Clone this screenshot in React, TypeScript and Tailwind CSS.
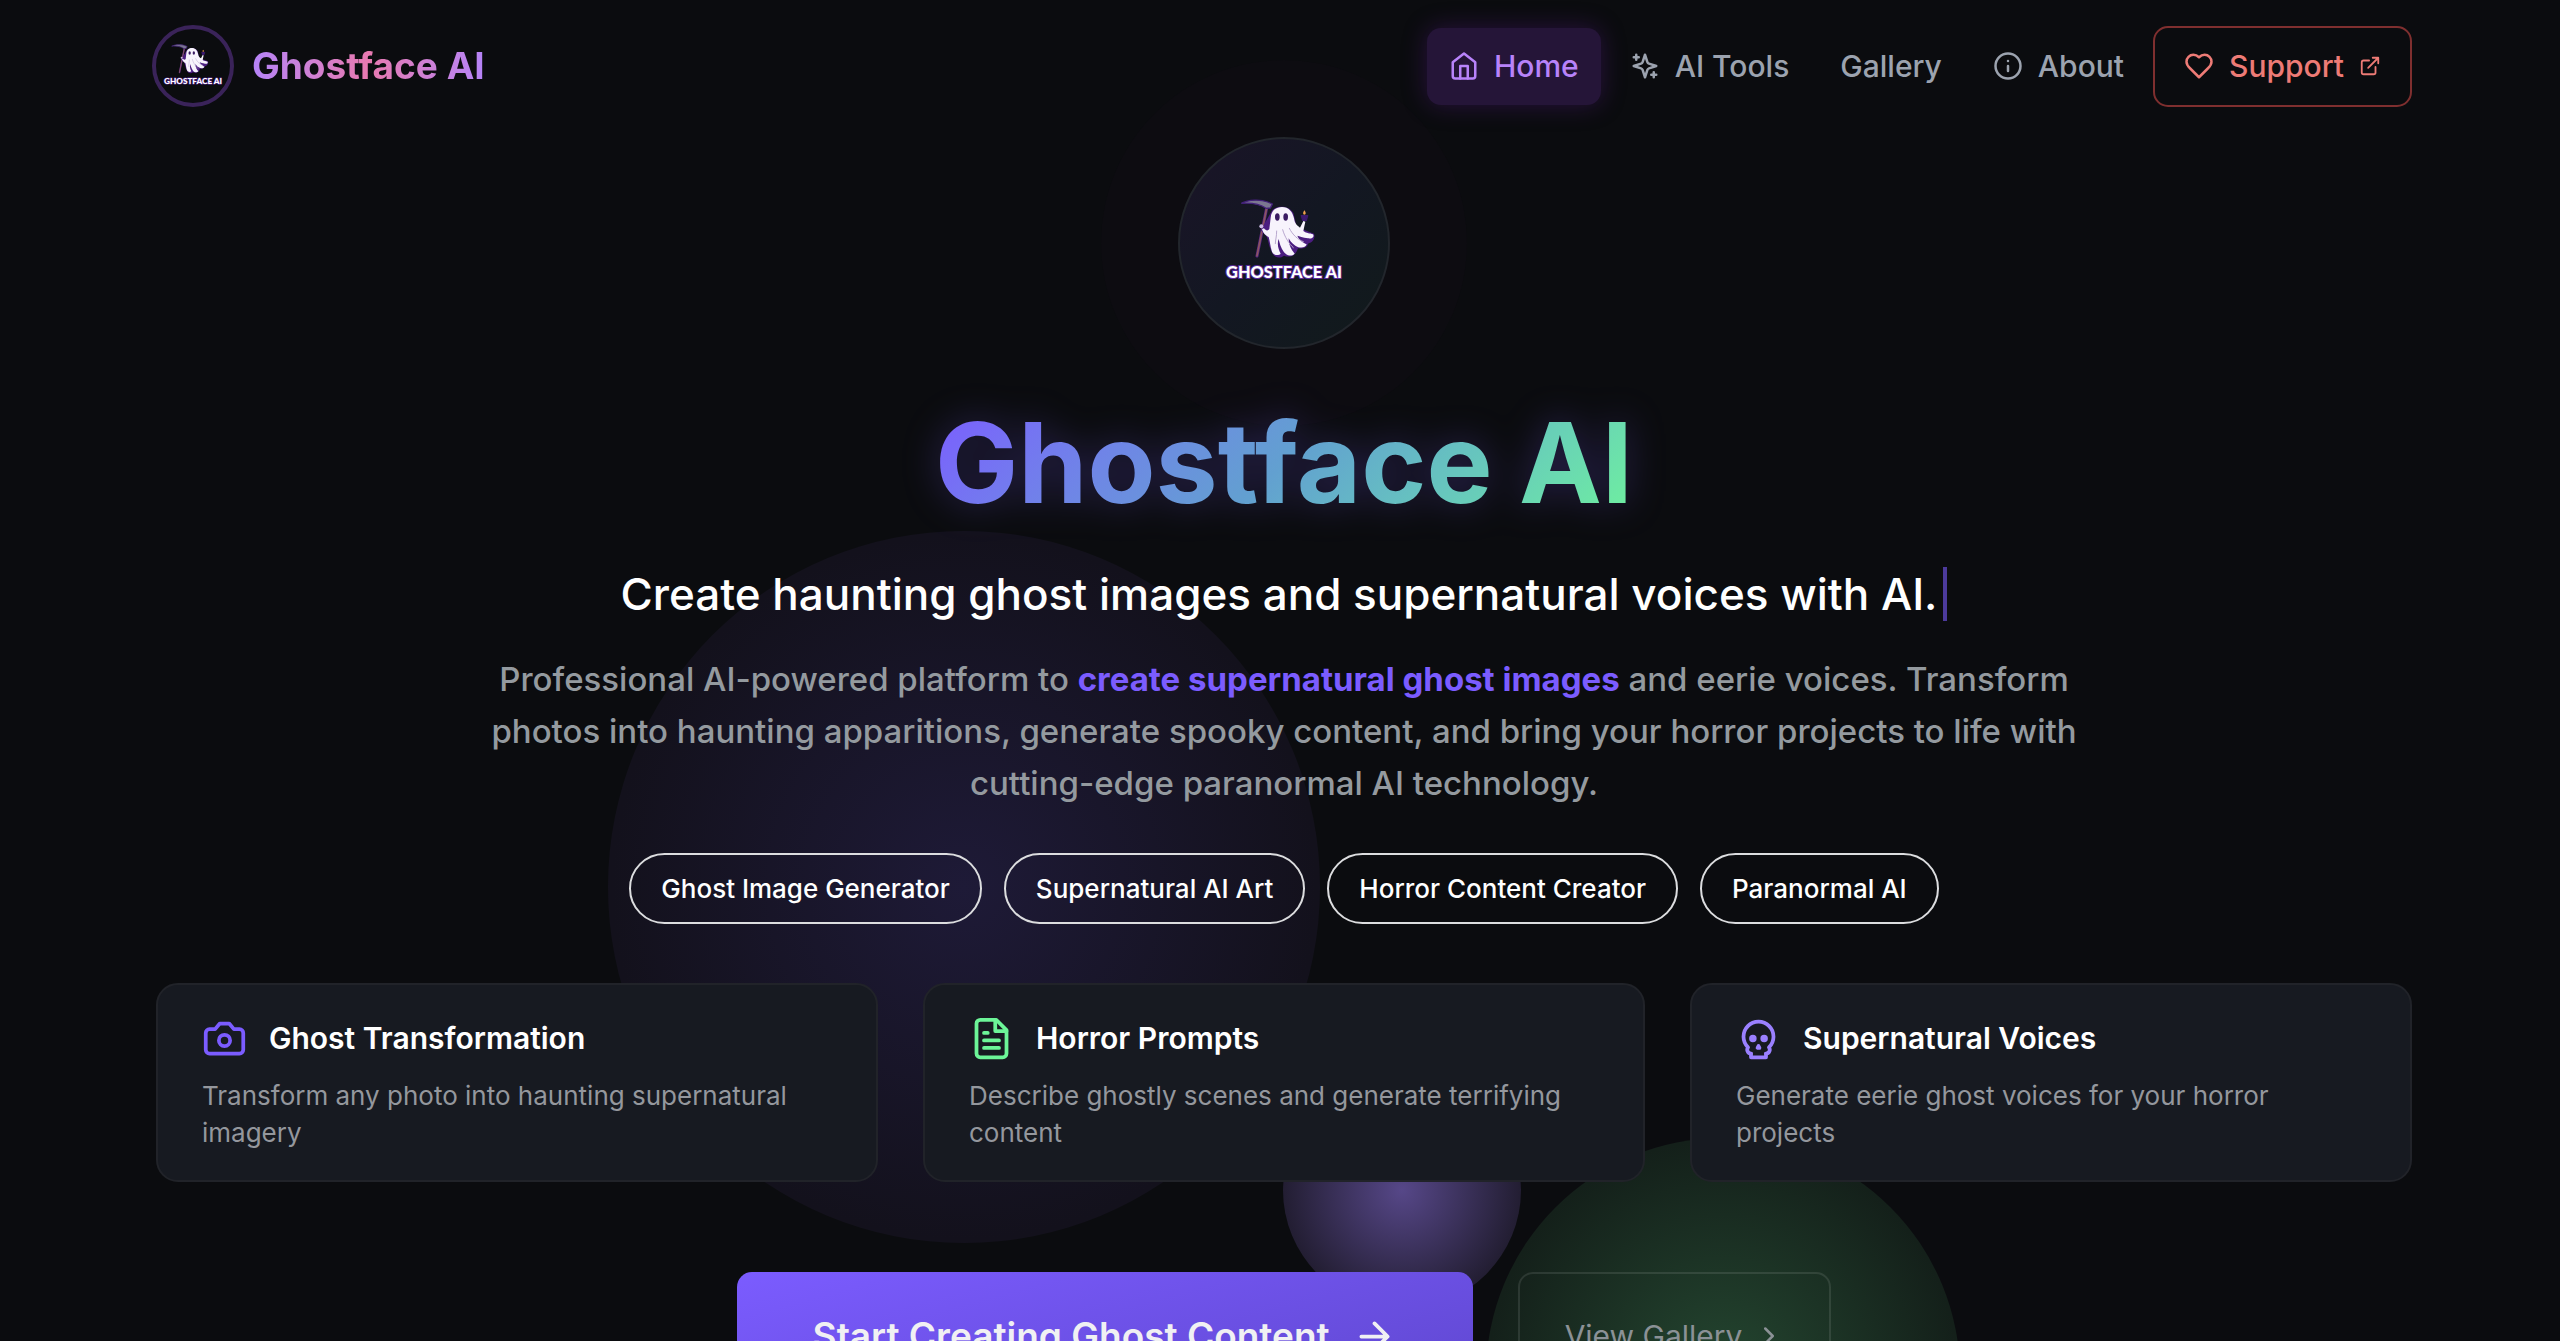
import React from 'react';

type IconProps = { className?: string; strokeWidth?: number; children: React.ReactNode };

const Icon: React.FC<IconProps> = ({ className, strokeWidth = 2, children }) => (
  <svg
    viewBox="0 0 24 24"
    fill="none"
    stroke="currentColor"
    strokeWidth={strokeWidth}
    strokeLinecap="round"
    strokeLinejoin="round"
    aria-hidden="true"
    className={className}
  >
    {children}
  </svg>
);

const GhostLogo: React.FC<{ className?: string }> = ({ className }) => (
  <svg viewBox="270 262 384 264" role="img" aria-label="Ghostface AI logo" className={className}>
    {/* Scythe */}
    <path d="M411 284 L381 433" stroke="#5b2a86" strokeWidth="9" strokeLinecap="round" />
    <path d="M411 284 L381 432" stroke="#8d5560" strokeWidth="5" strokeLinecap="round" />
    <path
      d="M334 275 C356 263 392 263 413 271 L427 277 L421 289 L408 290 C390 277 362 273 334 275 Z"
      fill="#7b7791"
      stroke="#43207a"
      strokeWidth="4"
    />
    {/* Cloak shadow */}
    <path
      d="M424 300 C434 282 474 278 490 304 L500 346 L552 366 C556 380 550 392 534 396 C532 408 516 412 504 410 C494 440 474 436 462 432 C450 442 434 438 428 426 C414 400 416 384 408 372 L392 356 Z"
      fill="#4b1d80"
    />
    {/* Body */}
    <path
      d="M422 318 C424 296 438 286 456 286 C476 286 488 300 492 320 C494 336 502 342 510 348 L520 328 L526 330 L520 358 C530 366 540 364 549 368 C554 376 546 382 534 380 C518 378 508 374 502 372 C508 388 520 392 530 398 C526 410 508 410 496 402 C484 394 478 384 476 380 C476 400 484 414 494 426 C486 436 470 432 462 422 C452 408 448 392 446 382 C440 398 446 414 452 426 C444 434 430 430 426 420 C420 402 420 388 416 376 C408 372 400 366 396 352 L402 350 C408 358 414 358 418 352 Z"
      fill="#f7f3fc"
    />
    <path
      d="M458 354 C464 376 478 398 490 408 M478 350 C488 370 504 384 520 390 M440 358 C440 376 436 384 436 396"
      stroke="#b9a8cf"
      strokeWidth="3"
      fill="none"
      strokeLinecap="round"
    />
    <ellipse cx="442" cy="316" rx="7" ry="11" fill="#3b1c63" />
    <ellipse cx="467" cy="316" rx="7" ry="11" fill="#3b1c63" />
    <circle cx="394" cy="344" r="6" fill="#cbb9e4" />
    {/* Candle */}
    <path d="M514 312 L533 312 L529 326 L518 326 Z" fill="#3c1a70" stroke="#3c1a70" strokeWidth="4" strokeLinejoin="round" />
    <path d="M523 296 C529 303 528 309 523 309 C518 309 518 303 523 296 Z" fill="#f0a04b" />
    <text
      x="462"
      y="500"
      textAnchor="middle"
      fill="#ffffff"
      stroke="#5b2a9a"
      strokeWidth="6"
      paintOrder="stroke"
      className="font-['Lato'] text-[49px] font-black"
    >
      GHOSTFACE AI
    </text>
  </svg>
);

const navLink = 'flex items-center gap-[15px] rounded-[14px] px-[22px]';

const Header: React.FC = () => (
  <header className="flex items-center justify-between pt-[25px] pb-[26px]">
    <a href="#home" className="-ml-1 flex items-center gap-[18px]">
      <span className="flex size-[82px] items-center justify-center rounded-full border-4 border-[#3a2359]">
        <GhostLogo className="w-[64px]" />
      </span>
      <span className="bg-linear-to-r from-[#b583f8] via-[#e879b0] to-[#b583f8] bg-clip-text text-[37px] leading-[52px] font-bold text-transparent">
        Ghostface AI
      </span>
    </a>

    <nav className="flex h-[81px] items-stretch gap-[7px] text-[30px] font-medium text-[#9ca3af]">
      <a
        href="#home"
        className={`${navLink} my-0.5 bg-[#251538] text-[#b883fa] shadow-[0_0_24px_rgba(88,28,135,0.4)]`}
      >
        <Icon className="size-[30px]">
          <path d="m3 9 9-7 9 7v11a2 2 0 0 1-2 2H5a2 2 0 0 1-2-2z" />
          <polyline points="9 22 9 12 15 12 15 22" />
        </Icon>
        Home
      </a>
      <a href="#tools" className={navLink}>
        <Icon className="size-[30px]">
          <path d="m12 3-1.912 5.813a2 2 0 0 1-1.275 1.275L3 12l5.813 1.912a2 2 0 0 1 1.275 1.275L12 21l1.912-5.813a2 2 0 0 1 1.275-1.275L21 12l-5.813-1.912a2 2 0 0 1-1.275-1.275L12 3Z" />
          <path d="M5 3v4M3 5h4M19 17v4M17 19h4" />
        </Icon>
        AI Tools
      </a>
      <a href="#gallery" className={navLink}>
        Gallery
      </a>
      <a href="#about" className={navLink}>
        <Icon className="size-[30px]">
          <circle cx="12" cy="12" r="10" />
          <path d="M12 16v-4M12 8h.01" />
        </Icon>
        About
      </a>
      <a
        href="#support"
        className="flex items-center gap-[15px] rounded-[15px] border-2 border-[#7f2f2f] px-[29px] text-[#ee7b76]"
      >
        <Icon className="size-[30px]">
          <path d="M19 14c1.49-1.46 3-3.21 3-5.5A5.5 5.5 0 0 0 16.500 3c-1.760 0-3 .5-4.500 2-1.500-1.500-2.740-2-4.500-2A5.500 5.500 0 0 0 2 8.500c0 2.300 1.500 4.050 3 5.500l7 7Z" />
        </Icon>
        Support
        <Icon className="size-[22px]">
          <path d="M15 3h6v6M10 14 21 3" />
          <path d="M18 13v6a2 2 0 0 1-2 2H5a2 2 0 0 1-2-2V8a2 2 0 0 1 2-2h6" />
        </Icon>
      </a>
    </nav>
  </header>
);

const keywords = [
  'Ghost Image Generator',
  'Supernatural AI Art',
  'Horror Content Creator',
  'Paranormal AI',
];

const features = [
  {
    title: 'Ghost Transformation',
    text: 'Transform any photo into haunting supernatural imagery',
    icon: (
      <Icon className="size-[45px] text-[#7b5cff]">
        <path d="M14.5 4h-5L7 7H4a2 2 0 0 0-2 2v9a2 2 0 0 0 2 2h16a2 2 0 0 0 2-2V9a2 2 0 0 0-2-2h-3l-2.500-3z" />
        <circle cx="12" cy="13" r="3" />
      </Icon>
    ),
  },
  {
    title: 'Horror Prompts',
    text: 'Describe ghostly scenes and generate terrifying content',
    icon: (
      <Icon className="size-[45px] text-[#6cf598]">
        <path d="M14.500 2H6a2 2 0 0 0-2 2v16a2 2 0 0 0 2 2h12a2 2 0 0 0 2-2V7.500L14.500 2z" />
        <polyline points="14 2 14 8 20 8" />
        <path d="M16 13H8M16 17H8M10 9H8" />
      </Icon>
    ),
  },
  {
    title: 'Supernatural Voices',
    text: 'Generate eerie ghost voices for your horror projects',
    icon: (
      <Icon className="size-[45px] text-[#9a80ff]">
        <circle cx="9" cy="12" r="1" />
        <circle cx="15" cy="12" r="1" />
        <path d="M8 20v2h8v-2" />
        <path d="m12.500 17-.5-1-.5 1h1z" />
        <path d="M16 20a2 2 0 0 0 1.560-3.250 8 8 0 1 0-11.120 0A2 2 0 0 0 8 20" />
      </Icon>
    ),
  },
];

// Floating orbs behind the hero
const Orbs: React.FC = () => (
  <div className="pointer-events-none absolute inset-0" aria-hidden="true">
    <div className="absolute top-[60px] left-1/2 size-[366px] -translate-x-1/2 rounded-full bg-[#0d0c11]" />
    <div className="absolute top-[531px] left-[452px] size-[712px] rounded-full bg-[radial-gradient(circle_at_center,#1e1a37,#13111c_70%)]" />
    <div className="absolute top-[1071px] left-[1127px] size-[238px] rounded-full bg-[radial-gradient(circle_at_center,#564788,#231e33_70%)]" />
    <div className="absolute top-[1138px] left-[1330px] size-[474px] rounded-full bg-[radial-gradient(circle_at_center,#244630,#14201a_70%)]" />
  </div>
);

const App: React.FC = () => {
  return (
    <div className="h-screen w-full overflow-hidden bg-[#0b0c0f] pl-2 font-['Inter',sans-serif] text-white">
      <div className="relative mx-auto max-w-[2256px]">
        <Orbs />
        <div className="relative">
          <Header />

          <main className="flex flex-col items-center pt-1">
            <div className="flex size-[212px] items-center justify-center rounded-full border-2 border-[#22262c] bg-linear-135 from-[#1a1428] via-[#131722] to-[#111a1b]">
              <GhostLogo className="w-[128px]" />
            </div>

            <h1 className="mt-[57px] bg-linear-135 from-[#7b5cff] via-[#62a0d0] to-[#6ff09e] bg-clip-text text-[111px] leading-[113px] font-bold text-transparent drop-shadow-[0_0_18px_rgba(123,92,255,0.28)]">
              Ghostface AI
            </h1>

            <div className="mt-[45px] flex items-center gap-1.5">
              <p className="text-[44px] leading-[60px] font-medium">
                Create haunting ghost images and supernatural voices with AI.
              </p>
              <span className="h-[54px] w-1 bg-[#4c3a9c]" />
            </div>

            <p className="mt-[29px] max-w-[1668px] text-center text-[33px] leading-[52px] font-medium text-[#949a9f]">
              Professional AI-powered platform to{' '}
              <strong className="font-bold text-[#7b5cff]">create supernatural ghost images</strong> and
              eerie voices. Transform photos into haunting apparitions, generate spooky content, and bring
              your horror projects to life with cutting-edge paranormal AI technology.
            </p>

            <ul className="mt-[44px] flex flex-wrap justify-center gap-[22px]">
              {keywords.map((keyword) => (
                <li
                  key={keyword}
                  className="flex h-[71px] items-center rounded-full border-2 border-[#dcdddf] px-[30px] text-[26px] font-medium"
                >
                  {keyword}
                </li>
              ))}
            </ul>

            <section className="mt-[59px] grid w-full grid-cols-3 gap-[45px]">
              {features.map((feature) => (
                <article
                  key={feature.title}
                  className="rounded-[22px] border-2 border-[#212329] bg-[#171a21] px-[44px] pt-[31px] pb-[29px]"
                >
                  <div className="flex items-center gap-[22px]">
                    {feature.icon}
                    <h2 className="text-[30px] leading-[45px] font-semibold">{feature.title}</h2>
                  </div>
                  <p className="mt-4 text-[26px] leading-[37px] text-[#94979d]">{feature.text}</p>
                </article>
              ))}
            </section>

            <div className="mt-[90px] flex items-start gap-[45px]">
              <button
                type="button"
                className="flex h-[128px] items-center gap-[22px] rounded-[15px] bg-linear-165 from-[#7b5cff] to-[#5f47cf] px-[76px] text-[37px] font-semibold text-[#f0f0f3]"
              >
                Start Creating Ghost Content
                <Icon className="size-[45px]">
                  <path d="M5 12h14M12 5l7 7-7 7" />
                </Icon>
              </button>
              <button
                type="button"
                className="flex h-[128px] items-center gap-3 rounded-[15px] border-2 border-white/10 px-[45px] text-[30px] text-[#8b9196]"
              >
                View Gallery
                <Icon className="size-[30px]">
                  <path d="m9 18 6-6-6-6" />
                </Icon>
              </button>
            </div>
          </main>
        </div>
      </div>
    </div>
  );
};

export default App;
